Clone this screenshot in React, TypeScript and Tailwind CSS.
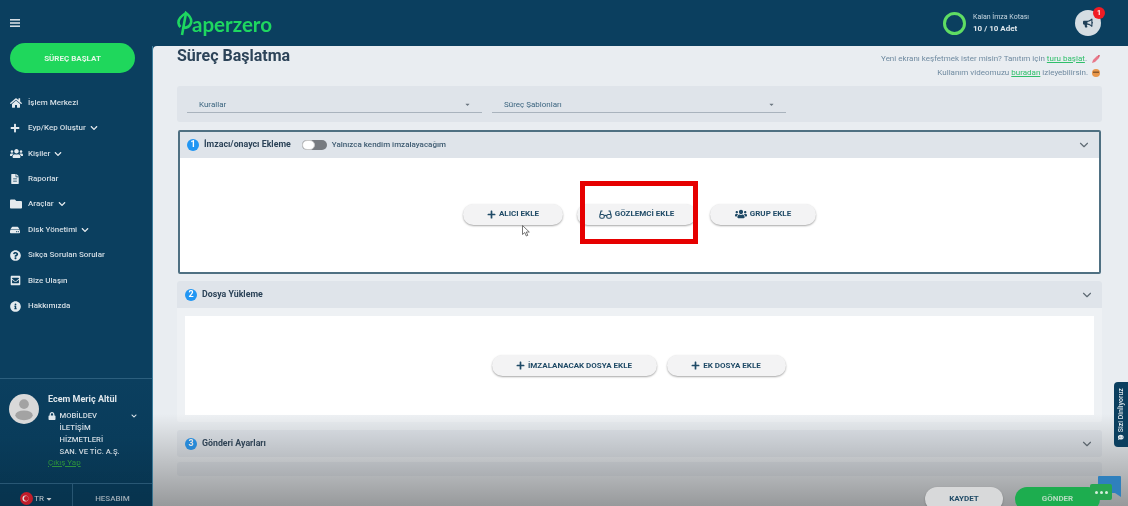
// App.tsx
import React from 'react';
import {
  FaHome, FaPlus, FaUsers, FaFileAlt, FaFolder, FaHdd, FaQuestionCircle, FaEnvelopeSquare,
  FaInfoCircle, FaChevronDown, FaBullhorn, FaLock, FaCaretDown, FaCommentDots,
} from 'react-icons/fa';
import { LuChevronDown } from 'react-icons/lu';

const menu = [
  { label: 'İşlem Merkezi', icon: FaHome, size: 'text-[12px]' },
  { label: 'Eyp/Kep Oluştur', icon: FaPlus, size: 'text-[10px]', sub: true },
  { label: 'Kişiler', icon: FaUsers, size: 'text-[13px]', sub: true },
  { label: 'Raporlar', icon: FaFileAlt, size: 'text-[10px]' },
  { label: 'Araçlar', icon: FaFolder, size: 'text-[12px]', sub: true },
  { label: 'Disk Yönetimi', icon: FaHdd, size: 'text-[10px]', sub: true },
  { label: 'Sıkça Sorulan Sorular', icon: FaQuestionCircle, size: 'text-[11px]' },
  { label: 'Bize Ulaşın', icon: FaEnvelopeSquare, size: 'text-[11px]' },
  { label: 'Hakkımızda', icon: FaInfoCircle, size: 'text-[11px]' },
];

const Glasses = () => (
  <svg width="13" height="9" viewBox="0 0 26 18" fill="none" stroke="#1f4a66" strokeWidth="2.2">
    <rect x="1.5" y="9" width="9" height="7.5" rx="3" />
    <rect x="15.5" y="9" width="9" height="7.5" rx="3" />
    <path d="M10.5 11.5q2.5-1.5 5 0M2 10l2-8h3M24 10l-2-8h-3" />
  </svg>
);

const Boton = ({ w, icon, children }: { w: string; icon: React.ReactNode; children: React.ReactNode }) => (
  <div className={`${w} h-[21px] rounded-full bg-[#f3f3f4] shadow-[0_1px_2px_rgba(0,0,0,0.35)] flex items-center justify-center gap-[3px] text-[8px] font-bold text-[#1f4a66]`}>
    {icon}
    <span>{children}</span>
  </div>
);

const Numara = ({ n }: { n: number }) => (
  <span className="w-[12px] h-[12px] rounded-full bg-[#2196f3] text-white text-[9px] font-bold flex items-center justify-center">{n}</span>
);

const Secim = ({ label, w }: { label: string; w: string }) => (
  <div className={`${w} h-[16px] border-b border-[#a9b3bd] flex items-center justify-between pl-[12px] pr-[11px] text-[8px] text-[#3d6680]`}>
    <span>{label}</span>
    <FaCaretDown className="text-[7px] text-[#6b7680]" />
  </div>
);

const App: React.FC = () => {
  return (
    <div className="relative w-[1128px] h-[506px] overflow-hidden bg-[#0b3f5f] font-['Roboto',sans-serif] blur-[0.35px]">
      {/* Header */}
      <header className="h-[46px] flex items-center text-white">
        <div className="w-[177px] pl-[10px] pb-[1px]">
          <svg width="10" height="8" viewBox="0 0 10 8" fill="#d5dde3">
            <rect width="10" height="1.6" /><rect y="3.2" width="10" height="1.6" /><rect y="6.4" width="10" height="1.6" />
          </svg>
        </div>
        <div className="flex items-end">
          <svg width="16" height="25" viewBox="0 0 16 25" fill="none" stroke="#1ed760" strokeWidth="2.6">
            <path d="M5 24 9 2c4 3 6 6 5 10-1 3-4 5-8 5" />
            <path d="M9 2C4 5 1 8 1.500 12c.2 2 1 3 2 4" />
          </svg>
          <span className="ml-[-1px] mb-[2px] text-[20.500px] leading-[20px] font-['Lato',sans-serif] font-bold text-[#1ed760]">aperzero</span>
        </div>
        <div className="ml-auto flex items-center">
          <div className="w-[23px] h-[23px] rounded-full border-[3px] border-[#5fdc63]" />
          <div className="ml-[7px] w-[102px]">
            <div className="text-[7px] leading-[11px] text-[#c9d8e2]">Kalan İmza Kotası</div>
            <div className="text-[8px] leading-[11px] font-bold text-[#dfe7ec]">10 / 10 Adet</div>
          </div>
          <div className="relative w-[26px] h-[26px] mr-[27px] rounded-full bg-[#d5dde3] flex items-center justify-center text-[#1f3f58]">
            <FaBullhorn className="text-[10px]" />
            <span className="absolute -top-[3px] -right-[4px] w-[12px] h-[12px] rounded-full bg-[#f01c24] text-white text-[7px] font-bold flex items-center justify-center">1</span>
          </div>
        </div>
      </header>

      <div className="flex h-[460px]">
        {/* Sidebar */}
        <aside className="w-[153px] h-full shrink-0 flex flex-col border-r border-[#3f7f9e] text-[#d3dde4]">
          <div className="mt-[-3px] ml-[10px] w-[125px] h-[30px] pt-[1px] rounded-full bg-[#1fd75c] flex items-center justify-center text-[8px] font-bold text-[#e3f7e6]">
            SÜREÇ BAŞLAT
          </div>
          <nav className="mt-[17px] pl-[10px]">
            {menu.map((m) => (
              <div key={m.label} className="h-[25.450px] flex items-center text-[8px] font-medium">
                <span className="w-[18px] flex justify-start text-[#e4eaee]"><m.icon className={m.size} /></span>
                <span>{m.label}</span>
                {m.sub && <FaChevronDown className="ml-[4px] text-[8px] text-[#e4eaee]" />}
              </div>
            ))}
          </nav>
          <div className="mt-auto border-t border-[#2c5f7e] h-[105px] flex pl-[9px] pt-[15px] bg-gradient-to-b from-[#0b3f5f] to-[#083a58]">
            <svg width="30" height="30" viewBox="0 0 31 31" className="shrink-0">
              <circle cx="15.500" cy="15.500" r="15.500" fill="#d9d9d9" />
              <circle cx="15.500" cy="10.500" r="5" fill="#a3a3a3" />
              <ellipse cx="15.500" cy="22" rx="9" ry="5" fill="#a3a3a3" />
            </svg>
            <div className="ml-[9px]">
              <div className="text-[9px] leading-[12px] mt-[-1px] font-bold text-[#dfe7ec]">Ecem Meriç Altül</div>
              <div className="mt-[5px] flex text-[7.700px] leading-[12px] font-medium">
                <FaLock className="text-[8px] mt-[2px] mr-[3.500px] text-[#dfe7ec]" />
                <div>MOBİLDEV<br />İLETİŞİM<br />HİZMETLERİ<br />SAN. VE TİC. A.Ş.</div>
                <FaChevronDown className="ml-[-4px] mt-[3px] text-[6px] text-[#dfe7ec] translate-x-[15px]" />
              </div>
              <div className="text-[8px] leading-[12px] mt-[-1px] text-[#2f9a3f] underline">Çıkış Yap</div>
            </div>
          </div>
          <div className="h-[23px] border-t border-[#2c5f7e] flex text-[8px] bg-[#083a58]">
            <div className="w-[73px] border-r border-[#2c5f7e] flex items-center justify-center pt-[7px] pl-[1px]">
              <svg width="13" height="13" viewBox="0 0 13 13" className="mr-[1px]">
                <circle cx="6.500" cy="6.500" r="6.500" fill="#d8202f" />
                <circle cx="5.500" cy="6.500" r="3" fill="#fff" />
                <circle cx="6.300" cy="6.500" r="2.400" fill="#d8202f" />
              </svg>
              <span>TR</span>
              <FaCaretDown className="text-[8px] ml-[1px]" />
            </div>
            <div className="flex-1 flex items-center justify-center pt-[7px] text-[#aebfca] font-medium">HESABIM</div>
          </div>
        </aside>

        {/* Main */}
        <main className="flex-1 bg-[#e9edf1] rounded-tl-[4px] pl-[24px] pr-[26px] overflow-hidden">
          <div className="flex justify-between h-[40px]">
            <h1 className="text-[16px] leading-[20px] font-bold text-[#2c4358]">Süreç Başlatma</h1>
            <div className="text-right text-[8px] leading-[14px] text-[#6f8aa0] pt-[6px] mr-[2px]">
              <div className="flex items-center justify-end">
                <span>Yeni ekranı keşfetmek ister misin? Tanıtım için <span className="text-[#2fbf6a] underline">turu başlat</span>.</span>
                <svg width="8" height="8" viewBox="0 0 8 8" className="ml-[5px]">
                  <path d="M0 8l1-3 4-4 3-1-1 3-4 4z" fill="#e8788a" />
                  <path d="M6 .5 7.500 0 7 2z" fill="#c9424f" />
                </svg>
              </div>
              <div className="flex items-center justify-end">
                <span>Kullanım videomuzu <span className="text-[#2fbf6a] underline">buradan</span> izleyebilirsin.</span>
                <svg width="8" height="8" viewBox="0 0 8 8" className="ml-[4px]">
                  <circle cx="4" cy="4" r="4" fill="#e8974a" />
                  <rect x="1" y="2.500" width="6" height="1.500" fill="#8a5a2c" />
                </svg>
              </div>
            </div>
          </div>

          <div className="h-[36px] rounded-[3px] bg-[#dfe4ea] flex items-center gap-[10px] pl-[10px] pt-[2px]">
            <Secim label="Kurallar" w="w-[295px]" />
            <Secim label="Süreç Şablonları" w="w-[294px]" />
          </div>

          <section className="mt-[8px] mx-[1px] h-[144px] border-2 border-[#4f7082] rounded-[2px] bg-white flex flex-col">
            <div className="h-[26px] bg-[#dfe4ea] flex items-center pl-[7px] pr-[8px] text-[#2c4358]">
              <Numara n={1} />
              <span className="ml-[5px] text-[8.800px] font-bold">İmzacı/onaycı Ekleme</span>
              <span className="relative ml-[11px] w-[25px] h-[10px] rounded-full bg-[#777b80]">
                <span className="absolute left-0 top-0 w-[13px] h-[10px] rounded-full bg-white border border-[#c8c8c8]" />
              </span>
              <span className="ml-[5px] text-[8px] font-medium text-[#3d5a70]">Yalnızca kendim imzalayacağım</span>
              <LuChevronDown className="ml-auto text-[14px] text-[#5f6b75]" />
            </div>
            <div className="flex-1 flex items-center justify-center gap-[14px] pb-[2px]">
              <Boton w="w-[100px]" icon={<FaPlus className="text-[9px]" />}>ALICI EKLE</Boton>
              <Boton w="w-[119px]" icon={<Glasses />}>GÖZLEMCİ EKLE</Boton>
              <Boton w="w-[106px]" icon={<FaUsers className="text-[12px]" />}>GRUP EKLE</Boton>
            </div>
          </section>

          <section className="mt-[7px] h-[141px] rounded-[3px] bg-[#eef1f4] flex flex-col">
            <div className="h-[27px] rounded-t-[3px] bg-[#dfe4ea] flex items-center pl-[8px] pr-[8px] text-[#2c4358]">
              <Numara n={2} />
              <span className="ml-[5px] text-[8.800px] font-bold">Dosya Yükleme</span>
              <LuChevronDown className="ml-auto text-[14px] text-[#5f6b75]" />
            </div>
            <div className="mx-[8px] mt-[8px] h-[99px] bg-white flex items-center justify-center gap-[10px] pr-[2px]">
              <Boton w="w-[165px]" icon={<FaPlus className="text-[9px]" />}>İMZALANACAK DOSYA EKLE</Boton>
              <Boton w="w-[119px]" icon={<FaPlus className="text-[9px]" />}>EK DOSYA EKLE</Boton>
            </div>
          </section>

          <section className="mt-[8px] h-[27px] rounded-[3px] bg-[#dfe4ea] flex items-center pl-[8px] pr-[8px] text-[#2c4358]">
            <Numara n={3} />
            <span className="ml-[5px] text-[8.800px] font-bold">Gönderi Ayarları</span>
            <LuChevronDown className="ml-auto text-[14px] text-[#5f6b75]" />
          </section>
          <div className="mt-[5px] h-[14px] rounded-[3px] bg-[#dfe4ea]" />

          <div className="relative z-10 mt-[11px] flex justify-end gap-[12px] pr-[2px]">
            <div className="w-[78px] h-[24px] rounded-full bg-[#d8d9da] shadow-[0_1px_2px_rgba(0,0,0,0.25)] flex items-center justify-center text-[8px] font-bold text-[#1f4a66]">KAYDET</div>
            <div className="w-[85px] h-[24px] rounded-full bg-[#1dad4f] flex items-center justify-center text-[8px] font-bold text-[#b5dcc0]">GÖNDER</div>
          </div>
        </main>
      </div>

      {/* Video alt gölgesi */}
      <div className="absolute left-[153px] right-0 bottom-0 h-[92px] pointer-events-none bg-gradient-to-b from-transparent to-[rgba(70,70,70,0.5)]" />
      <div className="absolute left-0 w-[153px] bottom-0 h-[70px] pointer-events-none bg-gradient-to-b from-transparent to-[rgba(0,0,0,0.12)]" />

      {/* Kırmızı işaret */}
      <div className="absolute left-[580px] top-[181px] w-[118px] h-[63px] border-[5px] border-[#e60000]" />

      {/* İmleç */}
      <svg className="absolute left-[522px] top-[225px]" width="9" height="12" viewBox="0 0 9 12" fill="#fff" stroke="#555" strokeWidth="0.8">
        <path d="M.5.5v9l2.300-2 1.500 3.500 1.500-.7-1.500-3.300h3z" />
      </svg>

      {/* Sizi Dinliyoruz */}
      <div className="absolute right-0 top-[382px] w-[14px] h-[65px] rounded-l-[4px] bg-[#0b3f5f] flex items-center justify-center">
        <span className="flex items-center gap-[2px] whitespace-nowrap -rotate-90 text-[7px] font-medium text-[#dfe7ec]">
          <FaCommentDots className="text-[6px] rotate-90" />
          Sizi Dinliyoruz
        </span>
      </div>

      {/* Sohbet balonları */}
      <svg className="absolute z-20 left-[1098px] top-[476px]" width="23" height="22" viewBox="0 0 23 22" fill="#2f80bd">
        <path d="M1 0h21a1 1 0 0 1 1 1v20l-6-4H1a1 1 0 0 1-1-1V1a1 1 0 0 1 1-1z" />
      </svg>
      <div className="absolute z-20 left-[1090px] top-[484px] w-[22px] h-[16px] rounded-[2px] bg-[#28a650] flex items-center justify-center gap-[2px]">
        <span className="w-[3px] h-[3px] rounded-full bg-[#d5efdc]" />
        <span className="w-[3px] h-[3px] rounded-full bg-[#d5efdc]" />
        <span className="w-[3px] h-[3px] rounded-full bg-[#d5efdc]" />
      </div>
    </div>
  );
};

export default App;
